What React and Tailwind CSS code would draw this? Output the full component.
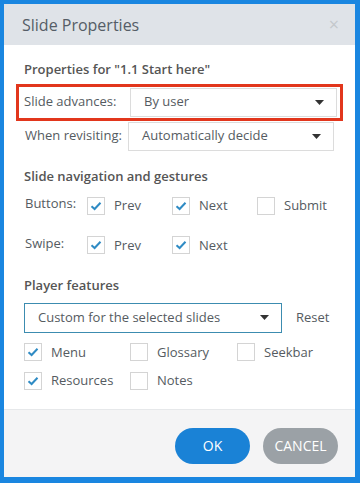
import { useState } from "react";

const Check = ({ checked }) => (
  <span className="flex h-[18px] w-[18px] shrink-0 items-center justify-center border border-[#d4d4d4] bg-white">
    {checked && (
      <svg width="12" height="10" viewBox="0 0 12 10">
        <path d="M1.5 5.2 L4.6 8 L10.5 1.8" fill="none" stroke="#2f8bc4" strokeWidth="2" />
      </svg>
    )}
  </span>
);

const Caret = () => (
  <svg width="9" height="5" viewBox="0 0 9 5">
    <path d="M0 0 H9 L4.5 5 Z" fill="#333" />
  </svg>
);

const Box = ({ label, checked, w }) => (
  <label className={`flex items-center gap-[9px] ${w}`}>
    <Check checked={checked} />
    <span>{label}</span>
  </label>
);

const App = () => {
  const [advance] = useState("By user");

  return (
    <div
      className="h-[483px] w-[360px] border-t-4 border-r-[5px] border-b-[6px] border-l-4 border-[#1a86e0] bg-white text-[13px] text-[#555b61]"
      style={{ fontFamily: '"Open Sans", "Noto Sans", sans-serif' }}
    >
      {/* Header */}
      <div className="flex h-[41px] items-center justify-between bg-[#dfe3e8] pl-[18px] pr-[16px]">
        <span className="text-[16px] text-[#555d66]">Slide Properties</span>
        <span className="-mt-[2px] text-[18px] leading-none text-[#c4c8cc]">×</span>
      </div>

      {/* Body */}
      <div className="h-[364px] px-[20px] pt-[15px]">
        <div className="font-semibold text-[#555]">Properties for "1.1 Start here"</div>

        <div className="-mx-[8px] mt-[4px] flex h-[37px] items-center border-[3px] border-[#e2361c] pl-[5px] pr-[3px]">
          <span className="w-[106px]">Slide advances:</span>
          <div className="flex h-[29px] flex-1 items-center justify-between border border-[#dcdcdc] pl-[13px] pr-[12px]">
            <span>{advance}</span>
            <Caret />
          </div>
        </div>

        <div className="mt-[1px] flex h-[29px] items-center pl-[1px] pr-[1px]">
          <span className="w-[103px]">When revisiting:</span>
          <div className="flex h-[29px] flex-1 items-center justify-between border border-[#dcdcdc] pl-[13px] pr-[12px]">
            <span>Automatically decide</span>
            <Caret />
          </div>
        </div>

        <div className="mt-[16px] font-semibold text-[#555]">Slide navigation and gestures</div>

        <div className="mt-[10px] flex items-center">
          <span className="-mt-[4px] w-[63px] pl-[1px]">Buttons:</span>
          <Box label="Prev" checked w="w-[85px]" />
          <Box label="Next" checked w="w-[85px]" />
          <Box label="Submit" />
        </div>

        <div className="mt-[20px] flex items-center">
          <span className="-mt-[4px] w-[63px] pl-[1px]">Swipe:</span>
          <Box label="Prev" checked w="w-[85px]" />
          <Box label="Next" checked w="w-[85px]" />
        </div>

        <div className="mt-[21px] font-semibold text-[#555]">Player features</div>

        <div className="mt-[7px] flex items-center">
          <div className="flex h-[30px] w-[258px] items-center justify-between border border-[#3c8cb0] pl-[13px] pr-[12px]">
            <span>Custom for the selected slides</span>
            <Caret />
          </div>
          <span className="ml-[14px]">Reset</span>
        </div>

        <div className="mt-[10px] grid grid-cols-[106px_107px_1fr] gap-y-[9px]">
          <Box label="Menu" checked />
          <Box label="Glossary" />
          <Box label="Seekbar" />
          <Box label="Resources" checked />
          <Box label="Notes" />
        </div>
      </div>

      {/* Footer */}
      <div className="flex h-[68px] items-center justify-end gap-[13px] border-t border-[#e6e8ea] bg-[#f4f4f5] pr-[17px] pt-[4px]">
        <button className="h-[36px] w-[75px] rounded-full bg-[#1a82d6] text-[14px] text-white">OK</button>
        <button className="h-[36px] w-[75px] rounded-full bg-[#9ba1a6] text-[14px] text-white">CANCEL</button>
      </div>
    </div>
  );
};

export default App;
